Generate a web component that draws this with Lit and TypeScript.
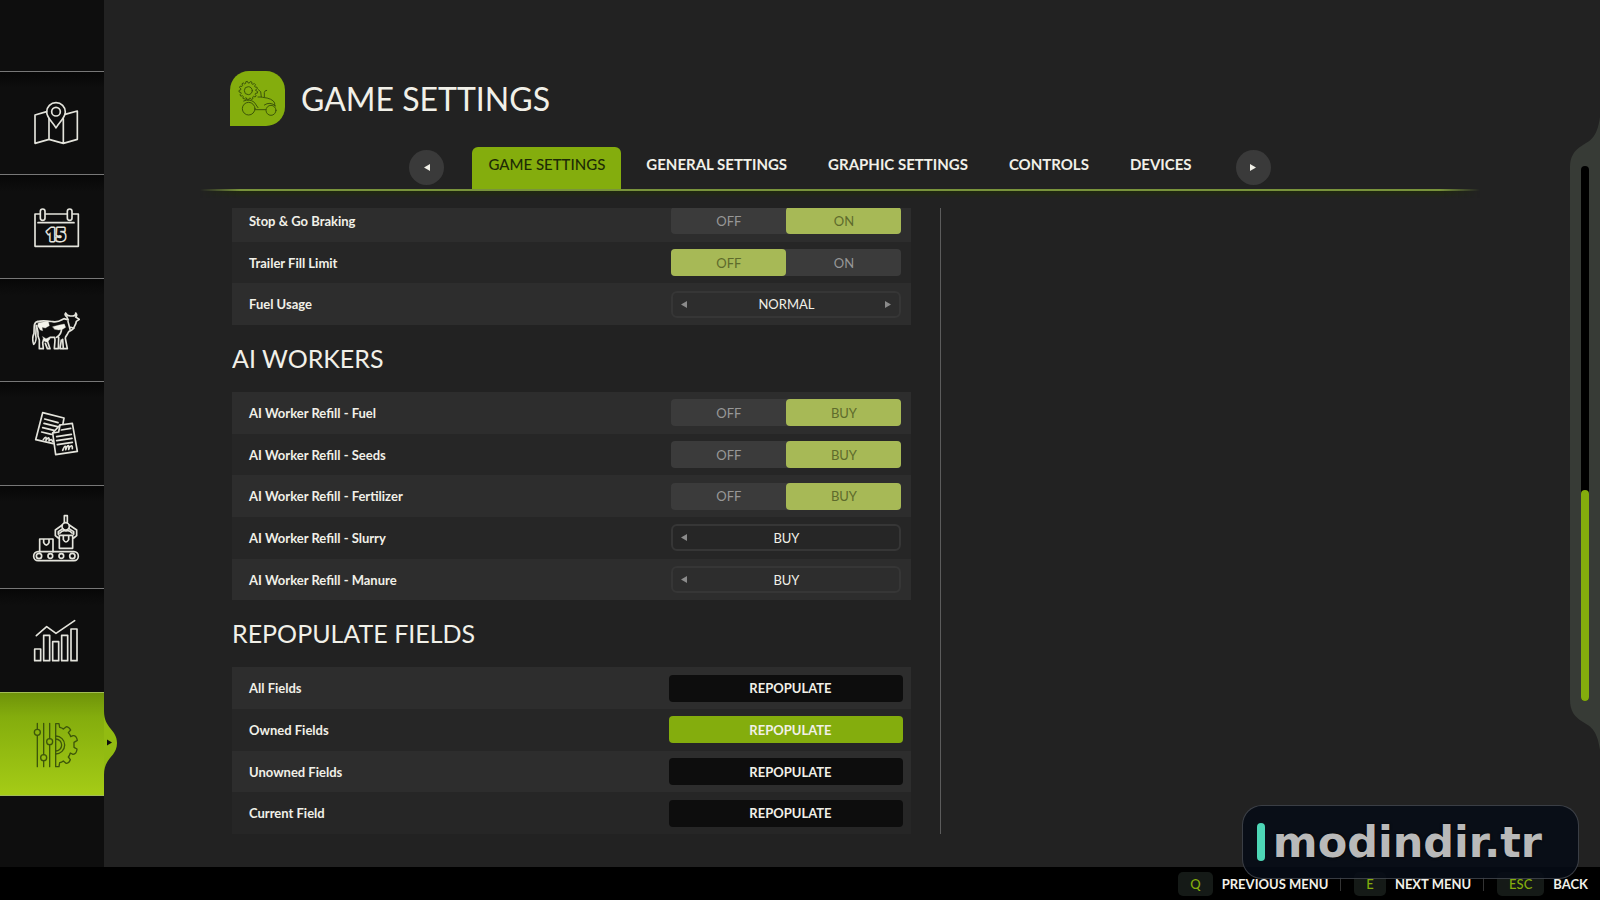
import { LitElement, html, css, svg } from "lit";
import { customElement, state } from "lit/decorators.js";
import { classMap } from "lit/directives/class-map.js";

type Row =
  | { kind: "toggle"; label: string; options: string[]; value: number }
  | { kind: "stepper"; label: string; options: string[]; value: number }
  | { kind: "action"; label: string };

interface Section {
  title?: string;
  rows: Row[];
}

const SECTIONS: Section[] = [
  {
    rows: [
      { kind: "toggle", label: "Stop & Go Braking", options: ["OFF", "ON"], value: 1 },
      { kind: "toggle", label: "Trailer Fill Limit", options: ["OFF", "ON"], value: 0 },
      { kind: "stepper", label: "Fuel Usage", options: ["LOW", "NORMAL", "HIGH"], value: 1 },
    ],
  },
  {
    title: "AI WORKERS",
    rows: [
      { kind: "toggle", label: "AI Worker Refill - Fuel", options: ["OFF", "BUY"], value: 1 },
      { kind: "toggle", label: "AI Worker Refill - Seeds", options: ["OFF", "BUY"], value: 1 },
      { kind: "toggle", label: "AI Worker Refill - Fertilizer", options: ["OFF", "BUY"], value: 1 },
      { kind: "stepper", label: "AI Worker Refill - Slurry", options: ["OFF", "BUY"], value: 1 },
      { kind: "stepper", label: "AI Worker Refill - Manure", options: ["OFF", "BUY"], value: 1 },
    ],
  },
  {
    title: "REPOPULATE FIELDS",
    rows: [
      { kind: "action", label: "All Fields" },
      { kind: "action", label: "Owned Fields" },
      { kind: "action", label: "Unowned Fields" },
      { kind: "action", label: "Current Field" },
    ],
  },
];

const TABS = ["GAME SETTINGS", "GENERAL SETTINGS", "GRAPHIC SETTINGS", "CONTROLS", "DEVICES"];

const KEYS = [
  { key: "Q", label: "PREVIOUS MENU" },
  { key: "E", label: "NEXT MENU" },
  { key: "ESC", label: "BACK" },
];

const VISIBLE_SHARE = 0.395;

/* Right half of a ten-toothed gear, used by the settings icon. */
const HALF_GEAR =
  "M167 157 H177 L179 168 Q186 169 190 173 L199 166 Q206 166 212 176 L205 184 Q211 191 212 196 L219 193 " +
  "Q229 192 232 207 L222 213 V228 L231 233 Q230 248 219 249 L211 245 Q209 252 205 257 L211 265 Q206 277 198 276 " +
  "L190 269 Q185 273 179 274 L177 286 H167 Z";

const toothed = (cx: number, cy: number, outer: number, inner: number, teeth: number) => {
  const pts: string[] = [];
  for (let i = 0; i < teeth; i++) {
    const base = (i / teeth) * Math.PI * 2;
    const step = (Math.PI * 2) / teeth;
    for (const [f, r] of [[0, inner], [0.2, outer], [0.55, outer], [0.72, inner]]) {
      const a = base + f * step;
      pts.push(`${(cx + Math.cos(a) * r).toFixed(1)} ${(cy + Math.sin(a) * r).toFixed(1)}`);
    }
  }
  return `M${pts.join("L")}Z`;
};

const NAV = [
  {
    name: "Map",
    box: "96 120 144 144",
    art: svg`
      <path d="M140 155L105 165V250L147 238L190 250L232 238V153L195 163M147 176V238M190 176V250"/>
      <path d="M168 204C160 188 140 174 140 156A28 28 0 0 1 196 156C196 174 176 188 168 204Z"/>
      <circle cx="168" cy="155" r="13"/>`,
  },
  {
    name: "Calendar",
    box: "96 429 144 144",
    art: svg`
      <path d="M119 459H105V556H235V459H218M137 459H201"/>
      <rect x="121" y="444" width="14" height="34" rx="7"/>
      <rect x="202" y="444" width="14" height="34" rx="7"/>
      <path d="M114 485H222"/>
      <text class="day" x="168" y="540" text-anchor="middle">15</text>`,
  },
  {
    name: "Animals",
    box: "96 739 144 144",
    art: svg`
      <path d="M112 783C100 784 103 800 102 818C96 830 98 842 101 851C108 845 109 832 107 824C109 812 107 800 110 795"/>
      <path d="M112 783C128 778 144 781 158 783C176 786 184 778 192 774L205 778L200 768C195 765 194 760 197 757C200 764 206 766 211 766H217C223 766 228 763 227 757C231 761 230 766 227 769L238 776L229 782C228 792 222 796 221 803C214 812 210 808 205 815C202 824 196 826 196 833L202 864H190L188 836"/>
      <path d="M109 795C112 806 116 812 114 826L118 838V864H130L128 846L131 836C138 844 146 840 150 830H164L165 838L163 864H175L176 830M136 848L142 864H150L144 846M184 838L180 864H188M170 830C180 824 186 812 184 804M204 782L210 806M221 803L212 800"/>
      <path class="solid" d="M115 786L145 782L148 795L136 802L126 800L128 810L121 808L113 796Z"/>
      <path class="solid" d="M158 798L178 793L193 790L197 800L188 806L176 808L164 806Z"/>
      <path class="solid" d="M128 828L138 834L148 830L144 846L134 842Z"/>`,
  },
  {
    name: "Contracts",
    box: "96 89 144 144",
    art: svg`
      <path d="M160 190L107 178L128 97L192 113L189 130"/>
      <path d="M134 116L174 127M132 129L172 139M128 142L162 150M125 155L154 162"/>
      <path d="M130 178C136 168 140 168 138 180C144 170 149 170 147 182C152 176 156 176 158 184"/>
      <path d="M180 134L217 129L232 213L167 223L158 158Z"/>
      <path d="M158 158L176 155L180 134M184 149L212 144M170 169L214 162M170 181L216 174M172 193L217 186"/>
      <path d="M188 210C194 194 200 194 197 208C203 192 209 192 206 207C211 194 218 192 217 205"/>`,
  },
  {
    name: "Production",
    box: "96 399 144 144",
    art: svg`
      <rect x="101" y="512" width="134" height="27" rx="13"/>
      <circle cx="117" cy="525" r="8"/><circle cx="151" cy="525" r="7"/><circle cx="184" cy="525" r="7"/><circle cx="217" cy="525" r="8"/>
      <path d="M119 512V474H159V512M131 474V485Q139 500 147 485V474"/>
      <path d="M178 463V502H218V463ZM190 463V476Q198 490 206 476V463"/>
      <path d="M193 424V404H202V424"/>
      <circle cx="197" cy="436" r="11"/>
      <path d="M187 432L166 447V464L175 471M208 432L230 447V464L221 471M188 443L175 452V460M207 443L221 452V460M180 456Q188 446 198 450Q208 446 216 456"/>`,
  },
  {
    name: "Statistics",
    box: "96 710 144 144",
    art: svg`
      <path d="M104 806H122V841H104ZM131 765H149V841H131ZM158 784H176V841H158ZM185 765H203V841H185ZM213 746H231V841H213Z"/>
      <path d="M109 766L140 739L168 759L224 721"/>`,
  },
  {
    name: "Settings",
    box: "96 149 144 144",
    art: svg`
      <path d="M112 156V174M112 192V286M131 156V250M131 268V286M149 156V202M149 220V286"/>
      <circle cx="112" cy="183" r="9"/><circle cx="131" cy="259" r="9"/><circle cx="149" cy="211" r="9"/>
      <path d=${HALF_GEAR}/>
      <path d="M167 194A27 27 0 0 1 167 248M167 203A18 18 0 0 1 167 239"/>`,
  },
];

@customElement("app-root")
export class AppRoot extends LitElement {
  @state() private sections: Section[] = SECTIONS;
  @state() private activeTab = 0;
  @state() private activeNav = 6;
  @state() private focusedAction = "Owned Fields";

  static styles = css`
    :host {
      --green: #84ad0d;
      --ink: #f1f0e8;
      display: flex;
      flex-direction: column;
      height: 100vh;
      background: #222;
      color: var(--ink);
      font-family: Lato, "Open Sans", sans-serif;
      font-size: 13px;
      line-height: 20px;
      overflow: hidden;
    }
    * {
      box-sizing: border-box;
    }
    button {
      font: inherit;
      color: inherit;
      background: none;
      border: 0;
      padding: 0;
      cursor: pointer;
    }
    .body {
      display: flex;
      flex: 1;
      min-height: 0;
    }
    .side {
      display: flex;
      flex-direction: column;
      width: 104px;
      padding: 71px 0;
      background: #0e0e0e;
    }
    .nav {
      position: relative;
      display: flex;
      flex: 1;
      align-items: center;
      padding: 2px 0 0 32px;
      border-top: 1px solid #777;
      background: linear-gradient(#070707, #0e0e0e 16px);
    }
    .nav:last-child {
      border-bottom: 1px solid #777;
    }
    .nav.active {
      border-color: #a3bd55;
      background: linear-gradient(#6f930a, #84ad0d 24px, #a5cc16);
    }
    .icon {
      width: 48px;
      height: 48px;
      fill: none;
      stroke: #e4e4dc;
      stroke-width: 5;
      stroke-linejoin: round;
      stroke-linecap: round;
    }
    .icon .solid {
      fill: #f4f4ec;
      stroke-width: 1;
    }
    .icon .day {
      fill: #0e0e0e;
      paint-order: stroke;
      stroke-width: 9;
      font-family: "Open Sans", sans-serif;
      font-size: 50px;
      font-weight: 800;
    }
    .active .icon {
      stroke: #3d560a;
      stroke-width: 4;
    }
    .bump {
      position: absolute;
      left: 100%;
      top: 18px;
      width: 13px;
      height: 64px;
    }
    .main {
      display: flex;
      flex: 1;
      flex-direction: column;
      min-width: 0;
      padding: 71px 90px 33px 96px;
    }
    .head {
      display: flex;
      align-items: center;
      gap: 16px;
      padding-left: 30px;
    }
    .logo {
      width: 55px;
      height: 55px;
      border-radius: 19px 19px 19px 0;
      background: var(--green);
      fill: none;
      stroke: #3d560a;
      stroke-width: 3;
      stroke-linejoin: round;
      stroke-linecap: round;
    }
    h1 {
      margin: 0;
      font-size: 32px;
      line-height: 55px;
      font-weight: 400;
    }
    .tabs {
      display: flex;
      justify-content: center;
      align-items: flex-start;
      gap: 28px;
      height: 42px;
      margin-top: 21px;
    }
    .tablist {
      display: flex;
      gap: 9px;
      height: 100%;
    }
    .tab {
      padding: 0 16px 8px;
      font-size: 15px;
      font-weight: 700;
      border-radius: 6px 6px 0 0;
    }
    .tab.active {
      background: var(--green);
      color: #1d2b05;
      font-weight: 500;
    }
    .round {
      display: grid;
      place-items: center;
      width: 35px;
      height: 35px;
      margin-top: 3px;
      border-radius: 50%;
      background: #3a3a3a;
    }
    .rule {
      height: 9px;
      margin-bottom: 10px;
      background: linear-gradient(#79933c, #79933c 2px, #20290f 2px, #222);
      mask-image: linear-gradient(90deg, transparent, #000 40px, #000 calc(100% - 40px), transparent);
    }
    .content {
      display: grid;
      grid-template-columns: minmax(0, 4fr) 1px minmax(0, 3fr);
      gap: 29px;
      flex: 1;
      min-height: 0;
      margin-left: 32px;
    }
    .scroll {
      display: flex;
      flex-direction: column;
      justify-content: flex-end;
      overflow: hidden;
    }
    .list {
      display: flex;
      flex: none;
      flex-direction: column;
      height: calc(100% + 8px);
    }
    .section {
      display: contents;
    }
    h2 {
      flex: none;
      margin: 0;
      font-size: 25px;
      line-height: 67px;
      font-weight: 400;
    }
    .row {
      display: flex;
      flex: 1;
      align-items: center;
      justify-content: space-between;
      min-height: 0;
      padding: 0 10px 0 17px;
      background: #262626;
    }
    .row:nth-of-type(odd) {
      background: #2d2d2d;
    }
    .name {
      font-weight: 700;
    }
    .control {
      display: flex;
      width: 230px;
      height: 27px;
      border-radius: 4px;
    }
    .toggle {
      background: #3b3b3b;
      color: #979797;
    }
    .option {
      position: relative;
      display: grid;
      flex: 1;
      place-items: center;
      border-radius: 4px;
      cursor: pointer;
    }
    .option input {
      position: absolute;
      inset: 0;
      margin: 0;
      opacity: 0;
    }
    .option.on {
      background: #a7b956;
      color: #5e6b2c;
    }
    .stepper {
      align-items: center;
      justify-content: space-between;
      padding: 0 8px;
      border: 2px solid #363636;
      border-radius: 6px;
    }
    .step {
      display: grid;
      place-items: center;
      width: 6px;
      height: 20px;
      color: #8b8b8b;
    }
    .step:disabled {
      visibility: hidden;
    }
    .tri {
      width: 6px;
      height: 7px;
      fill: currentColor;
    }
    .action {
      justify-content: center;
      align-items: center;
      width: 234px;
      margin-right: -2px;
      padding-left: 8px;
      background: #0d0d0d;
      font-weight: 700;
    }
    .action.focused {
      background: var(--green);
    }
    .divider {
      background: #5c5c5c;
    }
    .rail {
      display: grid;
      width: 30px;
      margin: 117px 0;
    }
    .rail > * {
      grid-area: 1 / 1;
    }
    .railbg {
      display: flex;
      flex-direction: column;
    }
    .railbg svg {
      flex: none;
      width: 30px;
      height: 50px;
      fill: #373b36;
    }
    .railfill {
      flex: 1;
      background: #373b36;
    }
    .track {
      display: flex;
      flex-direction: column;
      justify-content: flex-end;
      width: 8px;
      margin: 49px 0 49px 11px;
      border-radius: 4px;
      background: #000;
    }
    .thumb {
      border-radius: 4px;
      background: var(--green);
    }
    .foot {
      display: flex;
      align-items: center;
      justify-content: flex-end;
      height: 33px;
      padding-right: 12px;
      background: #000;
      font-weight: 700;
    }
    .hint {
      display: flex;
      align-items: center;
      gap: 9px;
    }
    .hint + .hint {
      margin-left: 12px;
      padding-left: 14px;
      background: linear-gradient(#333, #333) no-repeat left center / 1px 14px;
    }
    .key {
      padding: 2px 12px;
      border-radius: 5px;
      background: #151a17;
      color: var(--green);
      font-family: inherit;
      font-weight: 500;
    }
    .mark {
      position: absolute;
      right: 21px;
      bottom: 21px;
      display: flex;
      align-items: center;
      gap: 8px;
      height: 74px;
      padding: 0 36px 0 14px;
      border: 1px solid rgba(255, 255, 255, 0.2);
      border-radius: 20px;
      background: rgba(6, 12, 22, 0.86);
      color: #b9b9b9;
      font-family: "DejaVu Sans", sans-serif;
      font-size: 43px;
      line-height: 50px;
      font-weight: 700;
      text-shadow: 0 0 3px #000;
    }
    .bar {
      width: 8px;
      height: 38px;
      border-radius: 4px;
      background: #4dd6b6;
    }
  `;

  private setValue(row: Row, value: number) {
    this.sections = this.sections.map((s) => ({
      ...s,
      rows: s.rows.map((r) => (r === row ? ({ ...r, value } as Row) : r)),
    }));
  }

  private moveTab(by: number) {
    this.activeTab = (this.activeTab + by + TABS.length) % TABS.length;
  }

  private triangle(dir: "left" | "right") {
    return html`<svg class="tri" viewBox="0 0 6 7" aria-hidden="true">
      <path d=${dir === "left" ? "M6 0V7L0 3.5Z" : "M0 0V7L6 3.5Z"} />
    </svg>`;
  }

  private renderControl(row: Row) {
    if (row.kind === "action") {
      return html`<button
        class=${classMap({ control: true, action: true, focused: row.label === this.focusedAction })}
        aria-label=${`Repopulate ${row.label}`}
        @click=${() => (this.focusedAction = row.label)}
      >REPOPULATE</button>`;
    }
    if (row.kind === "toggle") {
      return html`<div class="control toggle" role="radiogroup" aria-label=${row.label}>
        ${row.options.map(
          (o, i) => html`<label class=${classMap({ option: true, on: i === row.value })}>
            <input type="radio" name=${row.label} .checked=${i === row.value} @change=${() => this.setValue(row, i)} />
            <span>${o}</span>
          </label>`
        )}
      </div>`;
    }
    return html`<div class="control stepper" role="group" aria-label=${row.label}>
      <button class="step" aria-label="Previous value" ?disabled=${row.value === 0}
        @click=${() => this.setValue(row, row.value - 1)}>${this.triangle("left")}</button>
      <output>${row.options[row.value]}</output>
      <button class="step" aria-label="Next value" ?disabled=${row.value === row.options.length - 1}
        @click=${() => this.setValue(row, row.value + 1)}>${this.triangle("right")}</button>
    </div>`;
  }

  render() {
    return html`
      <div class="body">
        <nav class="side" aria-label="Menu">
          ${NAV.map(
            (n, i) => html`<button class=${classMap({ nav: true, active: i === this.activeNav })}
              aria-label=${n.name} @click=${() => (this.activeNav = i)}>
              <svg class="icon" viewBox=${n.box} aria-hidden="true">${n.art}</svg>
              ${i === this.activeNav
                ? html`<svg class="bump" viewBox="0 0 13 64" aria-hidden="true">
                    <path d="M0 0C0 18 13 18 13 32C13 46 0 46 0 64Z" fill="#92bb11" />
                    <path d="M3 28.500V34.500L8 31.500Z" fill="#0e0e0e" />
                  </svg>`
                : null}
            </button>`
          )}
        </nav>

        <main class="main">
          <header class="head">
            <svg class="logo" viewBox="120 62 165 165" aria-hidden="true">
              <path d=${toothed(175, 121, 28, 23, 13)} />
              <circle cx="175" cy="121" r="12" />
              <circle cx="176" cy="175" r="19" />
              <circle cx="243" cy="180" r="15" />
              <path d="M195 178H227M161 152Q178 144 193 156L204 172M205 118L212 124L214 140M230 120Q224 120 223 126V140M204 140H216L218 141Q248 144 254 158V166M170 144L166 150M223 164Q240 152 257 167" />
            </svg>
            <h1>GAME SETTINGS</h1>
          </header>

          <div class="tabs">
            <button class="round" aria-label="Previous tab" @click=${() => this.moveTab(-1)}>${this.triangle("left")}</button>
            <div class="tablist" role="tablist">
              ${TABS.map(
                (t, i) => html`<button role="tab" aria-selected=${i === this.activeTab}
                  class=${classMap({ tab: true, active: i === this.activeTab })}
                  @click=${() => (this.activeTab = i)}>${t}</button>`
              )}
            </div>
            <button class="round" aria-label="Next tab" @click=${() => this.moveTab(1)}>${this.triangle("right")}</button>
          </div>
          <div class="rule"></div>

          <div class="content">
            <div class="scroll">
              <div class="list">
                ${this.sections.map(
                  (s) => html`<section class="section">
                    ${s.title ? html`<h2>${s.title}</h2>` : null}
                    ${s.rows.map(
                      (r) => html`<div class="row"><span class="name">${r.label}</span>${this.renderControl(r)}</div>`
                    )}
                  </section>`
                )}
              </div>
            </div>
            <div class="divider"></div>
          </div>
        </main>

        <div class="rail" aria-hidden="true">
          <div class="railbg">
            <svg viewBox="0 0 30 50"><path d="M30 0C27 22 19 24 13 28C4 33 0 40 0 50H30Z" /></svg>
            <div class="railfill"></div>
            <svg viewBox="0 0 30 50"><path d="M30 50C27 28 19 26 13 22C4 17 0 10 0 0H30Z" /></svg>
          </div>
          <div class="track"><div class="thumb" style="height: ${VISIBLE_SHARE * 100}%"></div></div>
        </div>
      </div>

      <footer class="foot">
        ${KEYS.map((k) => html`<button class="hint"><kbd class="key">${k.key}</kbd>${k.label}</button>`)}
      </footer>
      <div class="mark"><span class="bar"></span>modindir.tr</div>
    `;
  }
}
